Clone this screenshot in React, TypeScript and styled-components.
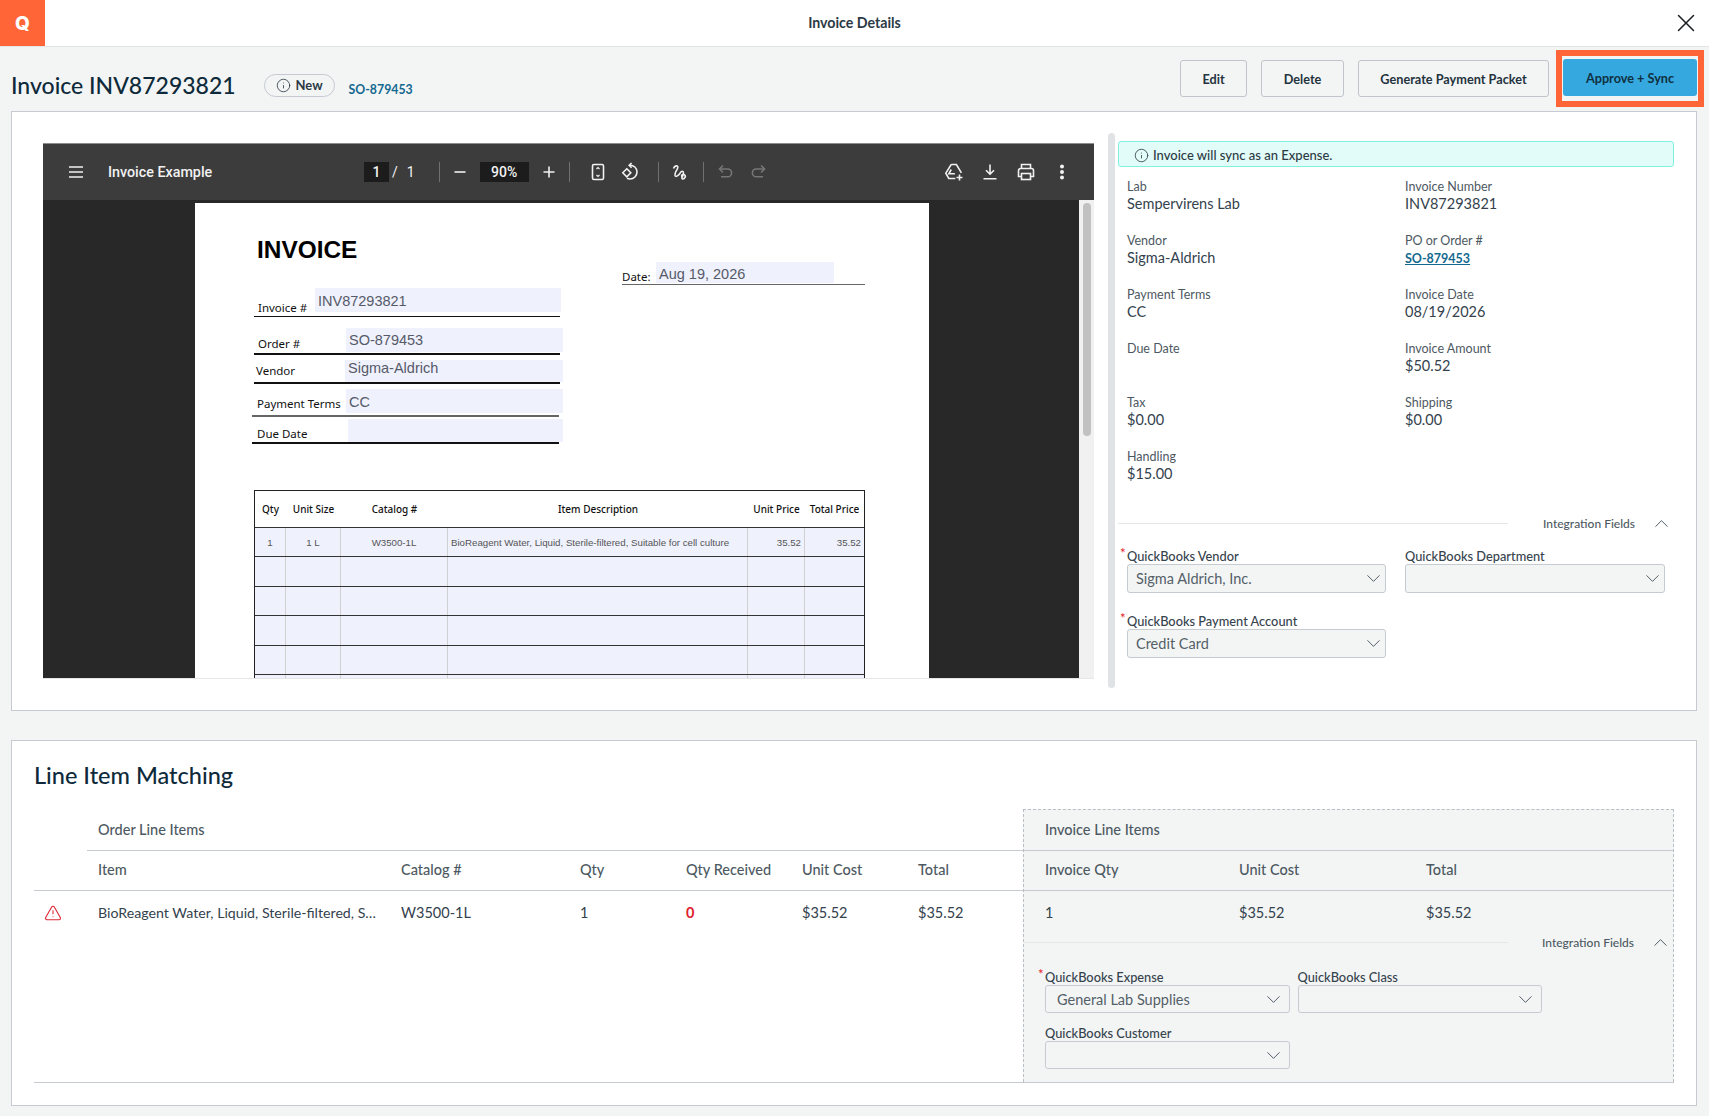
import React from "react";
import styled, { createGlobalStyle } from "styled-components";
import { ChevronDown, ChevronUp, Info, TriangleAlert, X } from "lucide-react";

const Global = createGlobalStyle`
  * { box-sizing: border-box; }
  html, body { margin: 0; padding: 0; background: #f3f5f5; }
  body { font-family: Lato, "Open Sans", sans-serif; color: #33424d; }
`;

const Page = styled.div`
  width: 1709px;
  height: 1116px;
  overflow: hidden;
  background: #f3f5f5;
`;

const TopBar = styled.header`
  height: 47px;
  display: grid;
  grid-template-columns: 1fr auto 1fr;
  align-items: center;
  background: #fff;
  border-bottom: 1px solid #e2e5e7;
`;
const Logo = styled.div`
  width: 45px;
  height: 46px;
  background: #ff6536;
  color: #fff;
  font: 800 19px Inter, sans-serif;
  display: flex;
  align-items: center;
  justify-content: center;
`;
const TopTitle = styled.div`
  font-size: 14.2px;
  font-weight: 700;
  color: #2c3a44;
  padding-bottom: 1px;
`;
const CloseWrap = styled.div`
  justify-self: end;
  margin-right: 8px;
  height: 30px;
  color: #1b1f22;
`;

const TitleBar = styled.div`
  height: 64px;
  display: flex;
  align-items: center;
  padding: 0 5px 1px 11px;
`;
const TitleGroup = styled.div`
  display: flex;
  align-items: center;
  margin-top: 13px;
`;
const InvoiceTitle = styled.h1`
  margin: 0;
  font-size: 23px;
  font-weight: 500;
  color: #0e2a3a;
`;
const StatusPill = styled.div`
  margin-left: 28px;
  width: 71px;
  height: 23px;
  border: 1px solid #c4cad0;
  border-radius: 12px;
  display: flex;
  align-items: center;
  justify-content: center;
  gap: 5px;
  font-size: 13px;
  font-weight: 700;
  color: #2c3a44;
`;
const HeaderLink = styled.a`
  margin-left: 14px;
  margin-top: 8px;
  font-size: 12.3px;
  font-weight: 700;
  color: #14698f;
`;
const Actions = styled.div`
  margin-left: auto;
  display: flex;
  align-items: center;
  gap: 14px;
`;
const GhostButton = styled.button<{ $w: number }>`
  width: ${(p) => p.$w}px;
  height: 37px;
  border: 1px solid #bfc5ca;
  border-radius: 3px;
  background: #f3f5f5;
  color: #24333d;
  font: 700 12.7px Lato, sans-serif;
`;
const Ring = styled.div`
  margin-left: -7px;
  border: 6px solid #ff6536;
  padding: 3px 1px 5px;
  display: flex;
`;
const PrimaryButton = styled.button`
  width: 134px;
  height: 37px;
  border: 0;
  border-radius: 3px;
  background: #35a8e0;
  color: #10303f;
  font: 700 12.7px Lato, sans-serif;
`;

const Card = styled.section<{ $h: number }>`
  margin-left: 11px;
  width: 1686px;
  height: ${(p) => p.$h}px;
  background: #fff;
  border: 1px solid #c5cbd1;
`;
const TopCard = styled(Card)`
  display: flex;
  align-items: flex-start;
  padding: 31px 0 0 31px;
`;

const Viewer = styled.div`
  width: 1051px;
  height: 536px;
  overflow: hidden;
  display: flex;
  flex-direction: column;
  border-bottom: 1px solid #e4e6e8;
  flex: none;
`;
const ViewerBar = styled.div`
  height: 57px;
  flex: none;
  display: flex;
  align-items: center;
  background: #3c3c3c;
  border-top: 1px solid #8c8c8c;
  color: #f1f1f1;
  font-family: Roboto, sans-serif;
`;
const BarStart = styled.div`
  width: 321px;
  padding-left: 23px;
  display: flex;
  align-items: center;
  gap: 22px;
`;
const DocName = styled.span`
  font-size: 14.3px;
  font-weight: 500;
`;
const NumBox = styled.span<{ $w: number }>`
  width: ${(p) => p.$w}px;
  height: 20px;
  margin-left: ${(p) => (p.$w > 30 ? 10 : 0)}px;
  background: #1c1c1c;
  display: flex;
  align-items: center;
  justify-content: center;
  font-size: 14px;
  font-weight: 500;
`;
const BarText = styled.span<{ $ml: number }>`
  margin-left: ${(p) => p.$ml}px;
  font-size: 14px;
`;
const BarSep = styled.span<{ $ml: number }>`
  width: 1px;
  height: 20px;
  margin-left: ${(p) => p.$ml}px;
  background: #707070;
`;
const BarIcon = styled.svg<{ $ml?: number; $dim?: boolean }>`
  width: 20px;
  height: 20px;
  flex: none;
  margin-left: ${(p) => p.$ml ?? 0}px;
  fill: none;
  stroke: ${(p) => (p.$dim ? "#767676" : "#f1f1f1")};
  stroke-width: 1.6;
`;
const BarEnd = styled.div`
  margin-left: auto;
  padding-right: 22px;
  display: flex;
  gap: 16px;
`;
const ViewerBody = styled.div`
  flex: 1;
  min-height: 0;
  display: flex;
  background: #282828;
  padding-top: 3px;
`;
const PdfPage = styled.div`
  position: relative;
  margin-left: 152px;
  width: 734px;
  height: 800px;
  background: #fff;
  flex: none;
  font-family: "Noto Sans", sans-serif;
  color: #111;
`;
const ViewerScroll = styled.div`
  margin-left: auto;
  margin-top: -3px;
  width: 15px;
  background: #f1f1f1;
  padding: 3px 3px 0 4px;
`;
const ViewerThumb = styled.div`
  height: 233px;
  border-radius: 4px;
  background: #c1c1c1;
`;

const PdfHeading = styled.div`
  position: absolute;
  left: 62px;
  top: 32px;
  font: 700 24.4px/30px "Liberation Sans", sans-serif;
  color: #000;
`;
const PdfLabel = styled.div<{ $x: number; $y: number }>`
  position: absolute;
  left: ${(p) => p.$x}px;
  top: ${(p) => p.$y - 8}px;
  font-size: 11.5px;
  line-height: 16px;
  white-space: nowrap;
`;
const PdfField = styled.div<{ $x: number; $y: number; $w: number; $h: number; $ty: number }>`
  position: absolute;
  left: ${(p) => p.$x}px;
  top: ${(p) => p.$y}px;
  width: ${(p) => p.$w}px;
  height: ${(p) => p.$h}px;
  background: #eff1fd;
  color: #565a68;
  font: 14.5px/${(p) => 20 + 2 * p.$ty}px "Liberation Sans", sans-serif;
  padding-left: 3px;
`;
const PdfRule = styled.div<{ $x: number; $y: number; $w: number; $gray?: boolean }>`
  position: absolute;
  left: ${(p) => p.$x}px;
  top: ${(p) => p.$y}px;
  width: ${(p) => p.$w}px;
  height: 1.5px;
  background: ${(p) => (p.$gray ? "#666" : "#111")};
`;
const PdfTable = styled.div`
  position: absolute;
  left: 59px;
  top: 287px;
  width: 611px;
  border: 1.5px solid #222;
`;
const PdfRow = styled.div<{ $head?: boolean }>`
  display: grid;
  grid-template-columns: 31px 55px 107px 300px 57px 1fr;
  height: ${(p) => (p.$head ? 37 : 29.4)}px;
  border-bottom: 1.5px solid #333;
  background: ${(p) => (p.$head ? "#fff" : "#eff1fd")};
`;
const PdfHeadCell = styled.div`
  display: flex;
  align-items: center;
  justify-content: center;
  font-size: 10px;
  font-weight: 500;
  white-space: nowrap;
`;
const PdfCell = styled.div<{ $align?: string }>`
  display: flex;
  align-items: center;
  justify-content: ${(p) => p.$align ?? "center"};
  padding: 1px 3px 0;
  border-right: 1px solid #d0d0d0;
  font: 9.7px "Liberation Sans", sans-serif;
  color: #555;
  white-space: nowrap;
  &:last-child { border-right: 0; }
`;

const Track = styled.div`
  margin: -10px 0 0 14px;
  width: 7px;
  height: 555px;
  border-radius: 4px;
  background: #e1e2e6;
  flex: none;
`;
const Panel = styled.div`
  margin: -2px 0 0 3px;
  width: 556px;
  flex: none;
`;
const Notice = styled.div`
  height: 26px;
  border: 1px solid #7ff0e2;
  border-radius: 3px;
  background: #e2fcf9;
  display: flex;
  align-items: center;
  gap: 4px;
  padding: 2px 0 0 15px;
  font-size: 13px;
  font-weight: 500;
  color: #2c3a44;
`;
const DetailGrid = styled.div`
  margin-top: 12px;
  padding-left: 9px;
  display: grid;
  grid-template-columns: 278px 1fr;
  row-gap: 20px;
`;
const DetailField = styled.div`
  height: 34px;
`;
const DetailLabel = styled.div`
  font-size: 12.5px;
  line-height: 16px;
  color: #4d5962;
`;
const DetailValue = styled.div`
  font-size: 14.5px;
  line-height: 18px;
  color: #33424d;
`;
const DetailLink = styled.a`
  display: block;
  margin-top: 1px;
  font-size: 12.5px;
  line-height: 18px;
  font-weight: 700;
  color: #14698f;
  text-decoration: underline;
`;
const FoldRow = styled.div<{ $rule: number; $gap: number }>`
  height: 20px;
  display: flex;
  align-items: center;
  font-size: 12px;
  font-weight: 500;
  color: #4d5962;
  &::before {
    content: "";
    width: ${(p) => p.$rule}px;
    margin-right: ${(p) => p.$gap}px;
    height: 1px;
    background: #e4e6e8;
  }
`;
const FoldChevron = styled.span`
  margin-left: auto;
  margin-right: 1px;
  display: flex;
  color: #4d5962;
`;
const TopFold = styled(FoldRow)`
  margin-top: 30px;
`;
const FormGrid = styled.div<{ $cols: string; $x: number; $top: number; $gapX: number; $gapY: number }>`
  display: grid;
  grid-template-columns: ${(p) => p.$cols};
  column-gap: ${(p) => p.$gapX}px;
  row-gap: ${(p) => p.$gapY}px;
  margin-top: ${(p) => p.$top}px;
  padding-left: ${(p) => p.$x}px;
`;
const FormField = styled.div``;
const FormLabel = styled.div<{ $req?: boolean }>`
  position: relative;
  height: 16px;
  font-size: 12.8px;
  line-height: 16px;
  font-weight: 500;
  color: #36434d;
  ${(p) =>
    p.$req
      ? `&::before { content: "*"; position: absolute; left: -7px; top: -3px; color: #e5202e; font-size: 13px; }`
      : ""}
`;
const SelectBox = styled.div`
  height: 29px;
  border: 1px solid #c5cbd1;
  border-radius: 3px;
  background: #f3f5f5;
  display: flex;
  align-items: center;
  justify-content: space-between;
  padding: 0 0 0 8px;
  font-size: 14.5px;
  color: #545f68;
`;

const LineCard = styled(Card)`
  margin-top: 29px;
  padding: 19px 22px 0;
`;
const SectionTitle = styled.h2`
  margin: 0;
  height: 30px;
  font-size: 23.5px;
  line-height: 30px;
  font-weight: 500;
  color: #0e2a3a;
`;
const MatchTable = styled.div`
  margin-top: 19px;
  width: 1640px;
  height: 274px;
  display: flex;
  border-bottom: 1px solid #c5cbd1;
`;
const OrderSide = styled.div`
  width: 989px;
  flex: none;
  padding-top: 1px;
`;
const GroupTitle = styled.div<{ $inset: number; $pad: number }>`
  height: 41px;
  margin-left: ${(p) => p.$inset}px;
  padding: 0 0 2px ${(p) => p.$pad}px;
  display: flex;
  align-items: center;
  border-bottom: 1px solid #c5cbd1;
  font-size: 14.5px;
  font-weight: 500;
  color: #4d5962;
`;
const OrderRow = styled.div<{ $head?: boolean }>`
  display: grid;
  grid-template-columns: 64px 303px 179px 106px 116px 116px 1fr;
  align-items: center;
  height: ${(p) => (p.$head ? 40 : 43)}px;
  font-size: 14.5px;
  color: ${(p) => (p.$head ? "#4d5962" : "#33424d")};
  ${(p) => (p.$head ? "border-bottom: 1px solid #c5cbd1; font-weight: 500; padding-bottom: 2px;" : "")}
`;
const InvoiceRow = styled.div<{ $head?: boolean }>`
  display: grid;
  grid-template-columns: 194px 187px 1fr;
  align-items: center;
  padding-left: 21px;
  height: ${(p) => (p.$head ? 40 : 41)}px;
  font-size: 14.5px;
  color: ${(p) => (p.$head ? "#4d5962" : "#33424d")};
  ${(p) => (p.$head ? "border-bottom: 1px solid #c5cbd1; font-weight: 500; padding-bottom: 2px;" : "padding-top: 2px;")}
`;
const WarnCell = styled.div`
  padding-left: 10px;
  display: flex;
  color: #dc2a36;
`;
const ItemName = styled.div`
  max-width: 283px;
  font-size: 14.2px;
  overflow: hidden;
  white-space: nowrap;
  text-overflow: ellipsis;
`;
const Zero = styled.div`
  color: #e0202c;
  font-weight: 700;
`;
const InvoiceSide = styled.div`
  flex: 1;
  background: #f3f5f5;
  border: 1px dashed #b9bfc4;
  border-bottom: 0;
`;
const BottomSelect = styled(SelectBox)`
  padding: 0 4px 0 11px;
  height: 28px;
`;

const Icon = {
  Menu: () => (
    <BarIcon viewBox="0 0 20 20"><path d="M3 5h14M3 10h14M3 15h14" /></BarIcon>
  ),
  Minus: ({ ml }: { ml: number }) => (
    <BarIcon $ml={ml} viewBox="0 0 20 20"><path d="M4.5 10h11" /></BarIcon>
  ),
  Plus: ({ ml }: { ml: number }) => (
    <BarIcon $ml={ml} viewBox="0 0 20 20"><path d="M4.5 10h11M10 4.5v11" /></BarIcon>
  ),
  Fit: ({ ml }: { ml: number }) => (
    <BarIcon $ml={ml} viewBox="0 0 20 20">
      <rect x="4.5" y="2.5" width="11" height="15" rx="1.4" />
      <path d="M8.5 7l1.5-1.5L11.5 7M8.5 13l1.5 1.5 1.5-1.5" strokeWidth="1.2" />
    </BarIcon>
  ),
  Rotate: ({ ml }: { ml: number }) => (
    <BarIcon $ml={ml} viewBox="0 0 20 20">
      <path d="M6.8 6.8L10.8 10.8 6.8 14.8 2.8 10.8Z" />
      <path d="M9.5 3.2C13.8 3 17 6 17 10c0 4-3.2 7-7 7-1.2 0-2.2-.3-3-.7" />
      <path d="M11.6 1L9.2 3.3l2.4 2.4" />
    </BarIcon>
  ),
  Draw: ({ ml }: { ml: number }) => (
    <BarIcon $ml={ml} viewBox="0 0 20 20">
      <path d="M3.5 6.5C4.5 3.3 8 3 7.8 5.5 7.6 8 4 10.5 5 13.5c1 2.5 4.5-1 5.5-3 1-1.8 3-1.8 3 .5 0 3-3 5.5-1 6 2 .3 4.2-3 1.7-4.4-1.4-.7-3 .2-2.5 1.9" />
    </BarIcon>
  ),
  Undo: ({ ml }: { ml: number }) => (
    <BarIcon $ml={ml} $dim viewBox="0 0 20 20">
      <path d="M7 3.5L3.5 7 7 10.5" />
      <path d="M3.5 7h8.2a3.9 3.9 0 010 7.8H5" />
    </BarIcon>
  ),
  Redo: ({ ml }: { ml: number }) => (
    <BarIcon $ml={ml} $dim viewBox="0 0 20 20">
      <path d="M13 3.5L16.5 7 13 10.5" />
      <path d="M16.5 7H8.3a3.9 3.9 0 000 7.8H15" />
    </BarIcon>
  ),
  Drive: () => (
    <BarIcon viewBox="0 0 20 20">
      <path d="M7.2 2.5h5.2l5 8.4M7.2 2.5L1.8 11.2l3 5.3h6.5" />
      <path d="M7.2 7.5l-2.3 4.3h6" />
      <path d="M15.5 12.5v6M12.5 15.5h6" />
    </BarIcon>
  ),
  Download: () => (
    <BarIcon viewBox="0 0 20 20">
      <path d="M10 2.5v9.5M6 8.2l4 4 4-4M3.5 16.8h13" />
    </BarIcon>
  ),
  Print: () => (
    <BarIcon viewBox="0 0 20 20">
      <path d="M5.5 6.5v-4h9v4" />
      <path d="M5.5 14.5H2.5V8.5a2 2 0 012-2h11a2 2 0 012 2v6h-3" />
      <rect x="5.5" y="11.5" width="9" height="6" />
    </BarIcon>
  ),
  More: () => (
    <BarIcon viewBox="0 0 20 20">
      <circle cx="10" cy="4.5" r="1.2" fill="#f1f1f1" />
      <circle cx="10" cy="10" r="1.2" fill="#f1f1f1" />
      <circle cx="10" cy="15.5" r="1.2" fill="#f1f1f1" />
    </BarIcon>
  ),
};

const Down = () => <ChevronDown size={23} strokeWidth={1} color="#4d5962" />;
const Up = () => (
  <FoldChevron>
    <ChevronUp size={23} strokeWidth={1} />
  </FoldChevron>
);

const details: [string, string][] = [
  ["Lab", "Sempervirens Lab"],
  ["Invoice Number", "INV87293821"],
  ["Vendor", "Sigma-Aldrich"],
  ["PO or Order #", "SO-879453"],
  ["Payment Terms", "CC"],
  ["Invoice Date", "08/19/2026"],
  ["Due Date", ""],
  ["Invoice Amount", "$50.52"],
  ["Tax", "$0.00"],
  ["Shipping", "$0.00"],
  ["Handling", "$15.00"],
];

export default function App() {
  return (
    <Page>
      <Global />
      <TopBar>
        <Logo>Q</Logo>
        <TopTitle>Invoice Details</TopTitle>
        <CloseWrap>
          <X size={30} strokeWidth={1.2} />
        </CloseWrap>
      </TopBar>

      <TitleBar>
        <TitleGroup>
          <InvoiceTitle>Invoice INV87293821</InvoiceTitle>
          <StatusPill>
            <Info size={15} strokeWidth={1.3} />
            New
          </StatusPill>
          <HeaderLink>SO-879453</HeaderLink>
        </TitleGroup>
        <Actions>
          <GhostButton $w={67}>Edit</GhostButton>
          <GhostButton $w={83}>Delete</GhostButton>
          <GhostButton $w={191}>Generate Payment Packet</GhostButton>
          <Ring>
            <PrimaryButton>Approve + Sync</PrimaryButton>
          </Ring>
        </Actions>
      </TitleBar>

      <TopCard $h={600}>
        <Viewer>
          <ViewerBar>
            <BarStart>
              <Icon.Menu />
              <DocName>Invoice Example</DocName>
            </BarStart>
            <NumBox $w={25}>1</NumBox>
            <BarText $ml={3}>/</BarText>
            <BarText $ml={9}>1</BarText>
            <BarSep $ml={24} />
            <Icon.Minus ml={10} />
            <NumBox $w={49}>90%</NumBox>
            <Icon.Plus ml={10} />
            <BarSep $ml={10} />
            <Icon.Fit ml={18} />
            <Icon.Rotate ml={12} />
            <BarSep $ml={18} />
            <Icon.Draw ml={11} />
            <BarSep $ml={13} />
            <Icon.Undo ml={12} />
            <Icon.Redo ml={12} />
            <BarEnd>
              <Icon.Drive />
              <Icon.Download />
              <Icon.Print />
              <Icon.More />
            </BarEnd>
          </ViewerBar>
          <ViewerBody>
            <PdfPage>
              <PdfHeading>INVOICE</PdfHeading>

              <PdfLabel $x={427} $y={74}>Date:</PdfLabel>
              <PdfField $x={461} $y={59} $w={178} $h={21} $ty={2}>Aug 19, 2026</PdfField>
              <PdfRule $x={427} $y={80.5} $w={243} $gray />

              <PdfLabel $x={63} $y={105}>Invoice #</PdfLabel>
              <PdfField $x={120} $y={85} $w={246} $h={24} $ty={3}>INV87293821</PdfField>
              <PdfRule $x={59} $y={112.5} $w={306} />

              <PdfLabel $x={63} $y={141}>Order #</PdfLabel>
              <PdfField $x={151} $y={125} $w={217} $h={24} $ty={2}>SO-879453</PdfField>
              <PdfRule $x={59} $y={150} $w={306} />

              <PdfLabel $x={61} $y={168}>Vendor</PdfLabel>
              <PdfField $x={150} $y={157} $w={218} $h={22} $ty={-1.5}>Sigma-Aldrich</PdfField>
              <PdfRule $x={59} $y={179} $w={306} />

              <PdfLabel $x={62} $y={201}>Payment Terms</PdfLabel>
              <PdfField $x={151} $y={186} $w={217} $h={24} $ty={3}>CC</PdfField>
              <PdfRule $x={57} $y={212} $w={307} $gray />

              <PdfLabel $x={62} $y={231}>Due Date</PdfLabel>
              <PdfField $x={153} $y={216} $w={215} $h={23} $ty={0} />
              <PdfRule $x={57} $y={239} $w={307} />

              <PdfTable>
                <PdfRow $head>
                  <PdfHeadCell>Qty</PdfHeadCell>
                  <PdfHeadCell>Unit Size</PdfHeadCell>
                  <PdfHeadCell>Catalog #</PdfHeadCell>
                  <PdfHeadCell>Item Description</PdfHeadCell>
                  <PdfHeadCell>Unit Price</PdfHeadCell>
                  <PdfHeadCell>Total Price</PdfHeadCell>
                </PdfRow>
                <PdfRow>
                  <PdfCell>1</PdfCell>
                  <PdfCell>1 L</PdfCell>
                  <PdfCell>W3500-1L</PdfCell>
                  <PdfCell $align="flex-start">
                    BioReagent Water, Liquid, Sterile-filtered, Suitable for cell culture
                  </PdfCell>
                  <PdfCell $align="flex-end">35.52</PdfCell>
                  <PdfCell $align="flex-end">35.52</PdfCell>
                </PdfRow>
                {[0, 1, 2, 3, 4].map((i) => (
                  <PdfRow key={i}>
                    <PdfCell />
                    <PdfCell />
                    <PdfCell />
                    <PdfCell />
                    <PdfCell />
                    <PdfCell />
                  </PdfRow>
                ))}
              </PdfTable>
            </PdfPage>
            <ViewerScroll>
              <ViewerThumb />
            </ViewerScroll>
          </ViewerBody>
        </Viewer>

        <Track />

        <Panel>
          <Notice>
            <Info size={15} strokeWidth={1.3} />
            Invoice will sync as an Expense.
          </Notice>
          <DetailGrid>
            {details.map(([label, value]) => (
              <DetailField key={label}>
                <DetailLabel>{label}</DetailLabel>
                {label === "PO or Order #" ? (
                  <DetailLink>{value}</DetailLink>
                ) : (
                  <DetailValue>{value}</DetailValue>
                )}
              </DetailField>
            ))}
          </DetailGrid>
          <TopFold $rule={390} $gap={35}>
            Integration Fields
            <Up />
          </TopFold>
          <FormGrid $cols="259px 260px" $x={9} $top={15} $gapX={19} $gapY={20}>
            <FormField>
              <FormLabel $req>QuickBooks Vendor</FormLabel>
              <SelectBox>Sigma Aldrich, Inc.<Down /></SelectBox>
            </FormField>
            <FormField>
              <FormLabel>QuickBooks Department</FormLabel>
              <SelectBox><span /><Down /></SelectBox>
            </FormField>
            <FormField>
              <FormLabel $req>QuickBooks Payment Account</FormLabel>
              <SelectBox>Credit Card<Down /></SelectBox>
            </FormField>
          </FormGrid>
        </Panel>
      </TopCard>

      <LineCard $h={366}>
        <SectionTitle>Line Item Matching</SectionTitle>
        <MatchTable>
          <OrderSide>
            <GroupTitle $inset={53} $pad={11}>Order Line Items</GroupTitle>
            <OrderRow $head>
              <span />
              <span>Item</span>
              <span>Catalog #</span>
              <span>Qty</span>
              <span>Qty Received</span>
              <span>Unit Cost</span>
              <span>Total</span>
            </OrderRow>
            <OrderRow>
              <WarnCell>
                <TriangleAlert size={18} strokeWidth={1.5} />
              </WarnCell>
              <ItemName>BioReagent Water, Liquid, Sterile-filtered, Suitable for cell culture</ItemName>
              <span>W3500-1L</span>
              <span>1</span>
              <Zero>0</Zero>
              <span>$35.52</span>
              <span>$35.52</span>
            </OrderRow>
          </OrderSide>
          <InvoiceSide>
            <GroupTitle $inset={0} $pad={21}>Invoice Line Items</GroupTitle>
            <InvoiceRow $head>
              <span>Invoice Qty</span>
              <span>Unit Cost</span>
              <span>Total</span>
            </InvoiceRow>
            <InvoiceRow>
              <span>1</span>
              <span>$35.52</span>
              <span>$35.52</span>
            </InvoiceRow>
            <FoldRow $rule={484} $gap={34}>
              Integration Fields
              <Up />
            </FoldRow>
            <FormGrid $cols="245px 244px" $x={21} $top={17} $gapX={7.5} $gapY={12}>
              <FormField>
                <FormLabel $req>QuickBooks Expense</FormLabel>
                <BottomSelect>General Lab Supplies<Down /></BottomSelect>
              </FormField>
              <FormField>
                <FormLabel>QuickBooks Class</FormLabel>
                <BottomSelect><span /><Down /></BottomSelect>
              </FormField>
              <FormField>
                <FormLabel>QuickBooks Customer</FormLabel>
                <BottomSelect><span /><Down /></BottomSelect>
              </FormField>
            </FormGrid>
          </InvoiceSide>
        </MatchTable>
      </LineCard>
    </Page>
  );
}
